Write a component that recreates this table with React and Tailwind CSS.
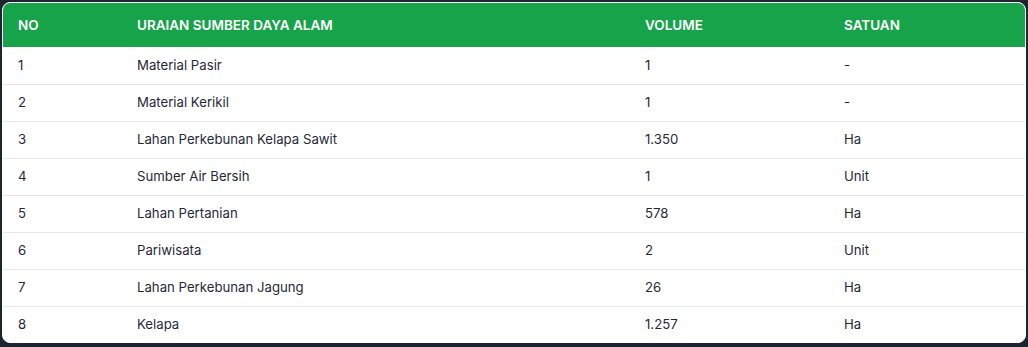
import React from "react";

const rows = [
  ["1", "Material Pasir", "1", "-"],
  ["2", "Material Kerikil", "1", "-"],
  ["3", "Lahan Perkebunan Kelapa Sawit", "1.350", "Ha"],
  ["4", "Sumber Air Bersih", "1", "Unit"],
  ["5", "Lahan Pertanian", "578", "Ha"],
  ["6", "Pariwisata", "2", "Unit"],
  ["7", "Lahan Perkebunan Jagung", "26", "Ha"],
  ["8", "Kelapa", "1.257", "Ha"],
];

export default function App() {
  return (
    <div
      className="bg-[#1e2530] h-[347px] pl-[2px] pr-[2px] pt-[2px] pb-[3px]"
      style={{ fontFamily: "Inter, 'Noto Sans', sans-serif" }}
    >
      <div className="rounded-lg border border-white bg-white overflow-hidden">
        <table className="w-full border-collapse text-left">
          <colgroup>
            <col className="w-[119px]" />
            <col className="w-[508px]" />
            <col className="w-[199px]" />
            <col />
          </colgroup>
          <thead>
            <tr className="bg-[#17a34a] text-white h-[44px] text-[13.5px]">
              <th className="pl-[15px] pr-4 font-semibold">NO</th>
              <th className="pl-[15px] pr-4 font-semibold">URAIAN SUMBER DAYA ALAM</th>
              <th className="pl-[15px] pr-4 font-semibold">VOLUME</th>
              <th className="pl-[15px] pr-4 font-semibold">SATUAN</th>
            </tr>
          </thead>
          <tbody className="text-[#1f2937] text-[13.2px]">
            {rows.map((r, i) => (
              <tr
                key={r[0]}
                className={
                  i < rows.length - 1
                    ? "h-[37px] border-b border-[#e5e7eb]"
                    : "h-[36px]"
                }
              >
                {r.map((c, j) => (
                  <td key={j} className="pl-[15px] pr-4 pt-[1px]">
                    {c}
                  </td>
                ))}
              </tr>
            ))}
          </tbody>
        </table>
      </div>
    </div>
  );
}
